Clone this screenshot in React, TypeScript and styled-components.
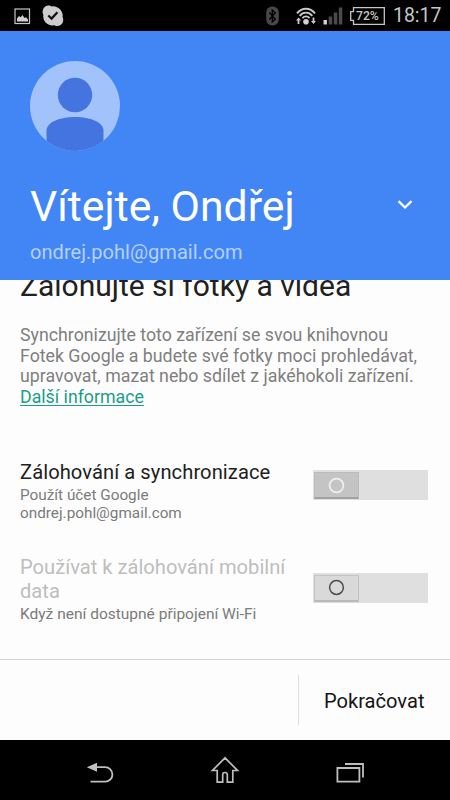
import React from 'react';
import styled, { createGlobalStyle } from 'styled-components';

const GlobalStyle = createGlobalStyle`
  * { box-sizing: border-box; }
  body { margin: 0; background: #000; font-family: Roboto, "Noto Sans", sans-serif; }
`;

const Screen = styled.div`
  width: 450px;
  height: 800px;
  display: flex;
  flex-direction: column;
  overflow: hidden;
  background: #fdfdfd;
`;

const StatusBar = styled.header`
  flex: 0 0 31px;
  display: flex;
  align-items: center;
  justify-content: space-between;
  padding: 0 8px 0 12px;
  background: #000;
  color: #c6c6c6;
`;

const StatusGroup = styled.div`
  display: flex;
  align-items: center;
  height: 31px;
`;

const Clock = styled.span`
  width: 49px;
  margin-left: 8px;
  font-size: 19.4px;
  line-height: 32px;
  white-space: nowrap;
`;

const Battery = styled.div`
  display: grid;
  align-items: center;
  width: 35px;
  height: 18px;
  margin-left: 7px;
`;

const BatteryShell = styled.svg`
  grid-area: 1 / 1;
  display: block;
`;

const BatteryLevel = styled.span`
  grid-area: 1 / 1;
  padding-left: 6px;
  font-size: 12.2px;
  font-weight: 500;
  line-height: 18px;
`;

const Hero = styled.section`
  flex: 0 0 249px;
  padding: 30px 30px 0;
  background: #4285f4;
  color: #fff;
`;

const Avatar = styled.svg`
  display: block;
  width: 90px;
  height: 90px;
`;

const HeroRow = styled.div`
  display: flex;
  align-items: center;
  justify-content: space-between;
  height: 50px;
  margin-top: 30px;
  padding-right: 7px;
`;

const Welcome = styled.h1`
  margin: 0;
  font-size: 42.8px;
  font-weight: 400;
  line-height: 50px;
  white-space: nowrap;
`;

const HeroMail = styled.p`
  margin: 9px 0 0;
  color: #b5d0fc;
  font-size: 20.1px;
  line-height: 25px;
`;

const Content = styled.main`
  flex: 1;
  overflow: hidden;
  padding: 0 22px 0 20px;
`;

const Heading = styled.h2`
  margin: -12px 0 0;
  color: #212121;
  font-size: 30px;
  font-weight: 400;
  line-height: 36px;
  white-space: nowrap;
`;

const Description = styled.p`
  margin: 21px 0 0;
  color: #7f7f7f;
  font-size: 17.75px;
  line-height: 20.5px;
  white-space: nowrap;
`;

const MoreLink = styled.a`
  color: #189d86;
  text-decoration: underline;
  text-decoration-thickness: 1px;
  text-underline-offset: 2px;
`;

const Setting = styled.div<{ $top: number }>`
  display: flex;
  align-items: flex-start;
  justify-content: space-between;
  margin-top: ${(p) => p.$top}px;
`;

const SettingText = styled.div`
  width: 280px;
  white-space: nowrap;
`;

const SettingTitle = styled.div<{ $muted?: boolean }>`
  color: ${(p) => (p.$muted ? '#bdbdbd' : '#212121')};
  font-size: 20.15px;
  line-height: 24px;
  letter-spacing: ${(p) => (p.$muted ? 0 : 0.07)}px;
`;

const SettingNote = styled.div<{ $size: number }>`
  margin-top: 3.4px;
  color: #7b7b7b;
  font-size: ${(p) => p.$size}px;
  line-height: 17.6px;
`;

const Track = styled.div<{ $top: number }>`
  width: 115px;
  height: 30px;
  margin-top: ${(p) => p.$top}px;
  padding: 2px 1px;
  background: #dfdfdf;
`;

const Thumb = styled.div<{ $raised?: boolean }>`
  display: flex;
  align-items: center;
  justify-content: center;
  width: 45px;
  height: 27px;
  border: 1px solid ${(p) => (p.$raised ? '#bcbcbc' : '#c3c3c3')};
  border-bottom: ${(p) => (p.$raised ? '2px solid #a2a2a2' : '2px solid #b9b9b9')};
  border-radius: 1px;
  background: ${(p) => (p.$raised ? '#c4c4c4' : '#d9d9d9')};
`;

const Footer = styled.footer`
  flex: 0 0 81px;
  display: flex;
  align-items: center;
  justify-content: flex-end;
  border-top: 1px solid #d5d5d5;
`;

const Continue = styled.button`
  width: 152px;
  height: 50px;
  padding: 2px 0 0 25px;
  border: 0;
  border-left: 1px solid #dedede;
  background: transparent;
  color: #151515;
  font: 400 20.1px Roboto, sans-serif;
  text-align: left;
`;

const NavBar = styled.nav`
  flex: 0 0 60px;
  display: grid;
  grid-template-columns: repeat(3, 125px);
  justify-content: center;
  align-items: center;
  justify-items: center;
  background: #000;
`;

const Glyph = styled.svg<{ $left?: number }>`
  display: block;
  flex: none;
  margin-left: ${(p) => p.$left ?? 0}px;
`;

function Toggle({ top, raised }: { top: number; raised?: boolean }) {
  return (
    <Track $top={top}>
      <Thumb $raised={raised}>
        <Glyph width="17" height="17" viewBox="0 0 17 17">
          <circle
            cx="8.5"
            cy="8.5"
            r="6.9"
            fill="none"
            stroke={raised ? '#efefef' : '#4c4c4c'}
            strokeWidth={raised ? 1.8 : 1.5}
          />
        </Glyph>
      </Thumb>
    </Track>
  );
}

export default function App() {
  return (
    <Screen>
      <GlobalStyle />
      <StatusBar>
        <StatusGroup>
          <Glyph width="20" height="20" viewBox="0 0 20 20">
            <rect x="3" y="3" width="14.5" height="14.5" fill="none" stroke="#c6c6c6" strokeWidth="1.2" />
            <path d="M5 15.5v-3l2-2.500 1.700 1.200L10.500 9l2 3 1.500-.8 2 2.300v2z" fill="#d0d0d0" />
          </Glyph>
          <Glyph $left={9} width="24" height="24" viewBox="0 0 24 24">
            <path d="M7.500 1.500c1.600 0 2.600.6 3.200.9C17 1.600 22.600 7 21.600 13.300c2 4.200-.8 8.700-5.300 8.700-1.400 0-2.300-.4-3.100-.7C6.500 22.300 1.400 17 2.300 10.500.2 6.500 3.200 1.500 7.500 1.500z" fill="#cdcdcd" />
            <path d="M7.300 11.500l3.300 3.100 5.800-6.400" fill="none" stroke="#111" strokeWidth="2.200" />
          </Glyph>
        </StatusGroup>
        <StatusGroup>
          <Glyph width="13" height="20" viewBox="0 0 13 20">
            <rect x=".2" y=".5" width="12.600" height="19" rx="6" fill="#484848" />
            <path d="M3.300 6.500l6 6.500-3 3V4l3 3-6 6.500" fill="none" stroke="#000" strokeWidth="1.300" />
          </Glyph>
          <Glyph $left={16} width="22" height="20" viewBox="0 0 22 20">
            <g fill="none" stroke="#c9c9c9" strokeWidth="1.900">
              <path d="M2 7.300C7 1.200 15 1.200 20 7.300" />
              <path d="M4.700 9.800c3.500-4.200 9.100-4.200 12.600 0" />
              <path d="M7.400 12.100c2.100-2.300 5.100-2.300 7.200 0" />
            </g>
            <circle cx="11" cy="15.800" r="2.800" fill="#d2d2d2" />
            <path d="M3.500 11.500L6 14.400H4.400V18H2.600v-3.600H1zM18.500 18L16 15.100h1.600v-3.600h1.800v3.600H21z" fill="#c9c9c9" />
          </Glyph>
          <Glyph $left={6} width="20" height="18" viewBox="0 0 20 18">
            <rect x="0.500" y="13" width="3.500" height="4.500" fill="#cfcfcf" />
            <path d="M5.700 9.500h3.500v8H5.700zM10.800 5.500h3.500v12h-3.500zM15.800.5h3.500v17h-3.500z" fill="#4b4b4b" />
          </Glyph>
          <Battery>
            <BatteryShell width="35" height="18" viewBox="0 0 35 18">
              <path d="M3.500.7h30.800v16.600H3.500v-4H.7V4.700h2.800z" fill="none" stroke="#c6c6c6" strokeWidth="1.300" />
            </BatteryShell>
            <BatteryLevel>72%</BatteryLevel>
          </Battery>
          <Clock>18:17</Clock>
        </StatusGroup>
      </StatusBar>

      <Hero>
        <Avatar viewBox="0 0 90 90">
          <defs>
            <clipPath id="avatar-disc">
              <circle cx="45" cy="45" r="45" />
            </clipPath>
          </defs>
          <g clipPath="url(#avatar-disc)">
            <rect width="90" height="90" fill="#a1c2fa" />
            <circle cx="45" cy="34" r="17.200" fill="#4374e0" />
            <path d="M16.500 90V70C16.500 61 30 56 45 56s28.500 5 28.500 14v20z" fill="#4374e0" />
          </g>
        </Avatar>
        <HeroRow>
          <Welcome>Vítejte, Ondřej</Welcome>
          <Glyph width="16" height="12" viewBox="0 0 16 12">
            <path d="M1.500 1.200L8 7.500l6.500-6.300" fill="none" stroke="#fff" strokeWidth="2.300" />
          </Glyph>
        </HeroRow>
        <HeroMail>ondrej.pohl@gmail.com</HeroMail>
      </Hero>

      <Content>
        <Heading>Zálohujte si fotky a videa</Heading>
        <Description>
          Synchronizujte toto zařízení se svou knihovnou
          <br />
          Fotek Google a budete své fotky moci prohledávat,
          <br />
          upravovat, mazat nebo sdílet z jakéhokoli zařízení.
          <br />
          <MoreLink>Další informace</MoreLink>
        </Description>
        <Setting $top={53}>
          <SettingText>
            <SettingTitle>Zálohování a synchronizace</SettingTitle>
            <SettingNote $size={15.3}>
              Použít účet Google
              <br />
              ondrej.pohl@gmail.com
            </SettingNote>
          </SettingText>
          <Toggle top={10} raised />
        </Setting>
        <Setting $top={32}>
          <SettingText>
            <SettingTitle $muted>
              Používat k zálohování mobilní
              <br />
              data
            </SettingTitle>
            <SettingNote $size={15.5}>Když není dostupné připojení Wi-Fi</SettingNote>
          </SettingText>
          <Toggle top={18} />
        </Setting>
      </Content>

      <Footer>
        <Continue>Pokračovat</Continue>
      </Footer>

      <NavBar>
        <Glyph width="30" height="28" viewBox="0 0 30 28">
          <path d="M9 11.200h11.200a7.200 7.200 0 0 1 0 14.400H5.500" fill="none" stroke="#bebebe" strokeWidth="1.800" />
          <path d="M1.800 11.200L12 6.800v9z" fill="#c2c2c2" />
        </Glyph>
        <Glyph width="30" height="30" viewBox="0 0 30 30">
          <path d="M15 2.800L2.500 15.500h4.700v11.700h5.500v-7.500q0-2.200 2.300-2.200t2.300 2.200v7.500h5.500V15.500h4.700z" fill="none" stroke="#bebebe" strokeWidth="1.700" />
        </Glyph>
        <Glyph width="30" height="26" viewBox="0 0 30 26">
          <path d="M2.400 11h22v13.600h-22zM10 7h18v13.500" fill="none" stroke="#bebebe" strokeWidth="1.800" />
        </Glyph>
      </NavBar>
    </Screen>
  );
}
